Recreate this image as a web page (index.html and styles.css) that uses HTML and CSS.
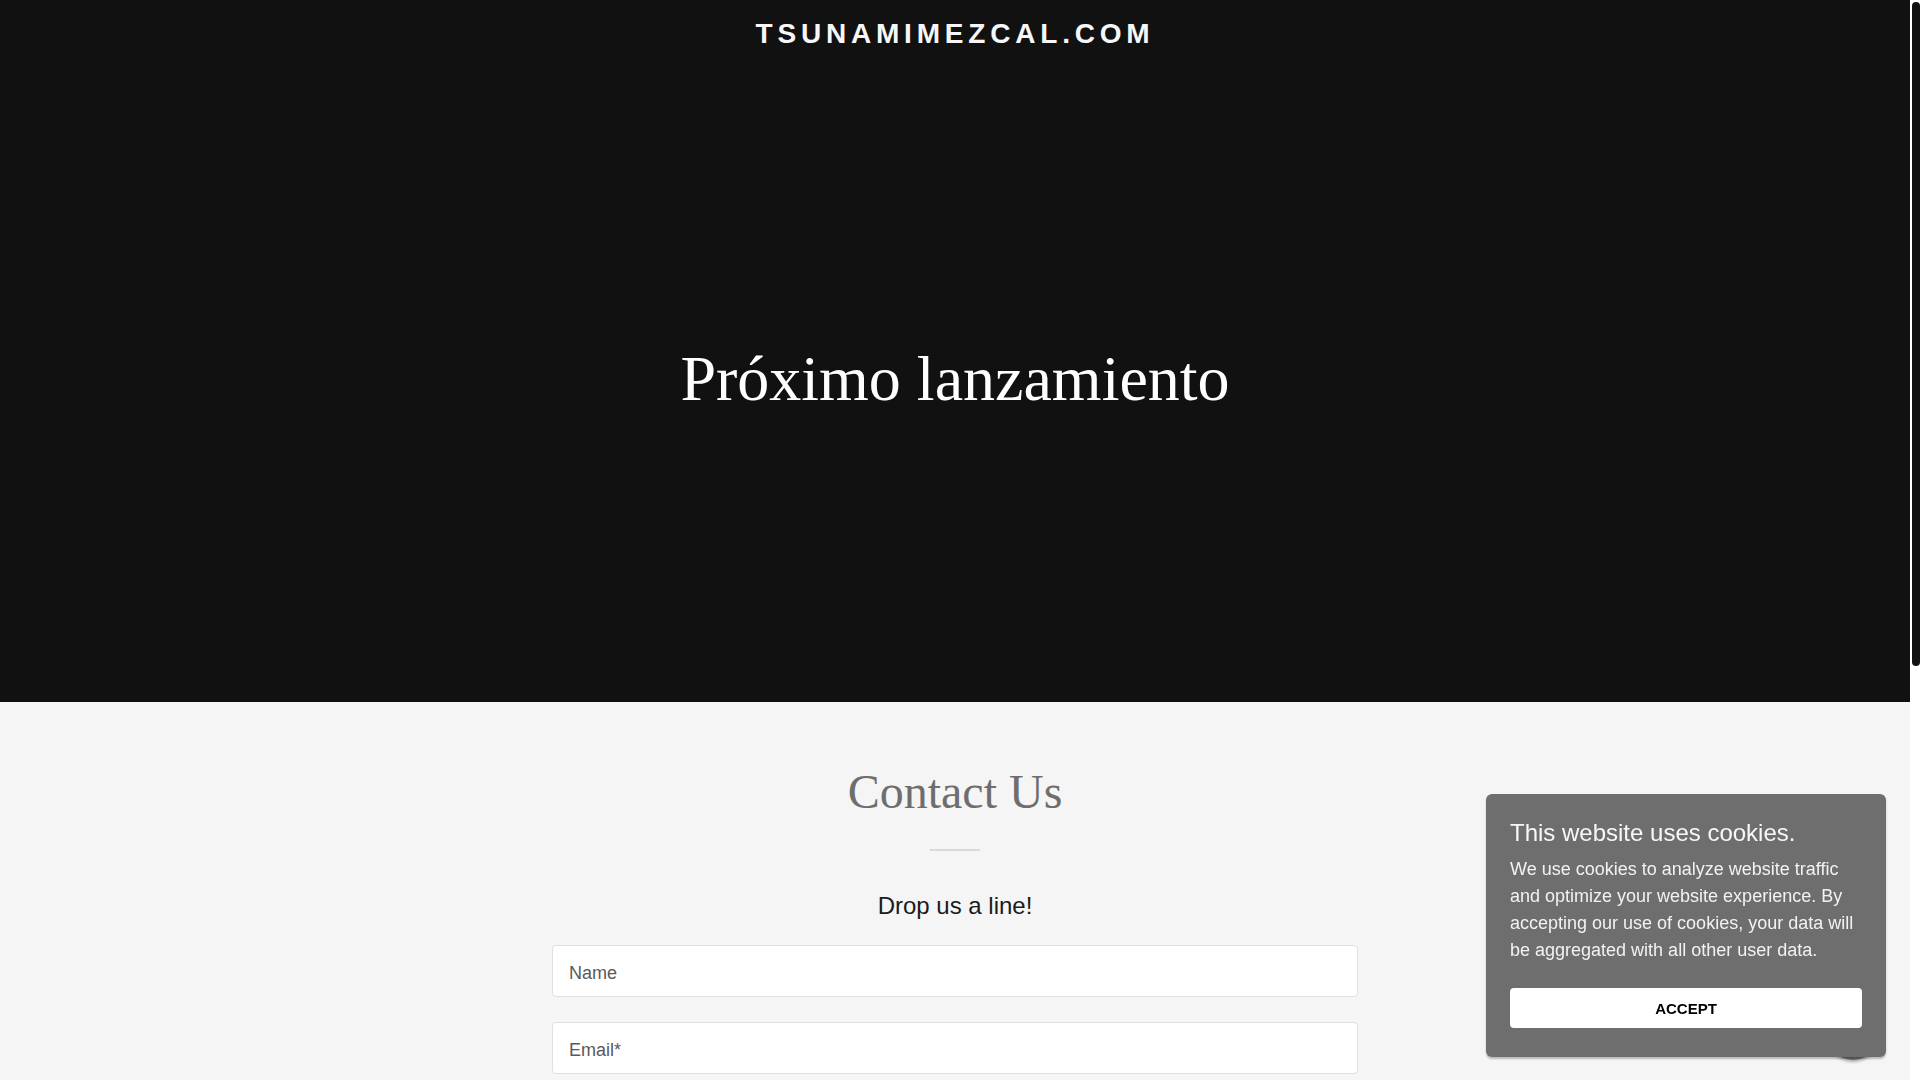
FILE: index.html
```html
<!DOCTYPE html>
<html lang="es">
<head>
<meta charset="utf-8">
<title>tsunamimezcal.com</title>
<link rel="stylesheet" href="styles.css">
</head>
<body>
<div class="page">
<section class="hero">
  <header class="hero-header">
    <h1 class="site-title">TSUNAMIMEZCAL.COM</h1>
  </header>
  <div class="hero-body">
    <h2 class="hero-title">Próximo lanzamiento</h2>
  </div>
</section>

<section class="contact">
  <h2 class="contact-title">Contact Us</h2>
  <hr class="divider">
  <h3 class="contact-sub">Drop us a line!</h3>
  <form class="contact-form">
    <input class="field" type="text" placeholder="Name">
    <input class="field" type="email" placeholder="Email*">
    <textarea class="field field-area" placeholder="Message"></textarea>
    <button class="send" type="button">SEND</button>
    <p class="recaptcha">This site is protected by reCAPTCHA and the Google Privacy Policy and Terms of Service apply.</p>
  </form>
</section>

<footer class="footer">
  <p class="footer-line">Copyright © 2023 tsunamimezcal.com - All Rights Reserved.</p>
  <p class="footer-line">Powered by GoDaddy</p>
</footer>
</div>

<div class="scrollbar" aria-hidden="true"><div class="scrollbar-thumb"></div></div>

<div class="chat-bubble"></div>

<div class="cookie">
  <h4 class="cookie-title">This website uses cookies.</h4>
  <p class="cookie-text">We use cookies to analyze website traffic and optimize your website experience. By accepting our use of cookies, your data will be aggregated with all other user data.</p>
  <button class="cookie-btn" type="button">ACCEPT</button>
</div>
</body>
</html>
```

FILE: styles.css
```css
html {
  background: #f5f5f5;
}

body {
  margin: 0;
  font-family: "Liberation Sans", Arial, sans-serif;
  background: #f5f5f5;
}

.page {
  margin-right: 10px;
}

.scrollbar {
  position: fixed;
  top: 0;
  right: 0;
  width: 10px;
  height: 100vh;
  box-sizing: border-box;
  padding: 2px 0 0 2px;
  background: #ffffff;
  z-index: 20;
}

.scrollbar-thumb {
  height: 664px;
  background: #111111;
  border-radius: 4px;
}

.hero {
  height: 702px;
  box-sizing: border-box;
  background: #111111;
  padding-top: 16px;
}

.site-title {
  margin: 0;
  text-align: center;
  font-family: "Liberation Sans", Arial, sans-serif;
  font-weight: 700;
  font-size: 28px;
  line-height: 35px;
  letter-spacing: 4.8px;
  color: #f7f7f7;
}

.hero-body {
  margin-top: 288px;
}

.hero-title {
  margin: 0;
  text-align: center;
  font-family: "Liberation Serif", "Times New Roman", serif;
  font-weight: 400;
  font-size: 64px;
  line-height: 80px;
  color: #ffffff;
}

.contact {
  padding: 60px 0 56px;
  background: #f5f5f5;
  text-align: center;
}

.contact-title {
  margin: 0;
  font-family: "Liberation Serif", "Times New Roman", serif;
  font-weight: 400;
  font-size: 48px;
  line-height: 60px;
  color: #6e6e6e;
}

.divider {
  width: 50px;
  height: 2px;
  margin: 27px auto 0;
  border: 0;
  background: #dadada;
}

.contact-sub {
  margin: 40px 0 0;
  font-weight: 400;
  font-size: 24px;
  line-height: 30px;
  color: #1b1b1b;
}

.contact-form {
  width: 806px;
  margin: 24px auto 0;
  display: flex;
  flex-direction: column;
  gap: 25px;
}

.field {
  height: 52px;
  box-sizing: border-box;
  padding: 5px 16px 0;
  border: 1px solid #e0e0e0;
  border-radius: 4px;
  background: #ffffff;
  font-family: "Liberation Sans", Arial, sans-serif;
  font-size: 18px;
  color: #1b1b1b;
  outline: none;
}

.field::placeholder {
  color: #5a5a5a;
}

.field-area {
  height: 140px;
  padding: 16px;
  resize: none;
}

.send {
  height: 56px;
  border: 0;
  border-radius: 4px;
  background: #111111;
  color: #ffffff;
  font-family: "Liberation Sans", Arial, sans-serif;
  font-weight: 700;
  font-size: 15px;
  letter-spacing: 1px;
}

.recaptcha {
  margin: 0;
  font-size: 14px;
  line-height: 20px;
  color: #5a5a5a;
}

.footer {
  min-height: 330px;
  box-sizing: border-box;
  padding: 56px 0;
  background: #111111;
  text-align: center;
}

.footer-line {
  margin: 0 0 16px;
  font-size: 16px;
  line-height: 24px;
  color: #a8a8a8;
}

.chat-bubble {
  position: fixed;
  right: 39px;
  bottom: 20px;
  width: 56px;
  height: 56px;
  border-radius: 50%;
  background: #6a6a6a;
  box-shadow: 0 2px 3px rgba(0, 0, 0, 0.3);
  z-index: 5;
}

.cookie {
  position: fixed;
  right: 34px;
  bottom: 23px;
  width: 400px;
  box-sizing: border-box;
  padding: 24px 24px 29px;
  background: #6e6e6e;
  border-radius: 6px;
  box-shadow: 0 2px 2px rgba(0, 0, 0, 0.25);
  color: #ffffff;
  z-index: 10;
}

.cookie-title {
  margin: 0;
  font-weight: 400;
  font-size: 24px;
  line-height: 30px;
  color: #f7f7f7;
}

.cookie-text {
  margin: 8px 0 0;
  font-size: 18px;
  line-height: 27px;
  color: #f2f2f2;
}

.cookie-btn {
  display: block;
  width: 100%;
  height: 40px;
  margin-top: 24px;
  border: 0;
  border-radius: 4px;
  background: #ffffff;
  color: #000000;
  font-family: "Liberation Sans", Arial, sans-serif;
  font-weight: 700;
  font-size: 15px;
}
```
